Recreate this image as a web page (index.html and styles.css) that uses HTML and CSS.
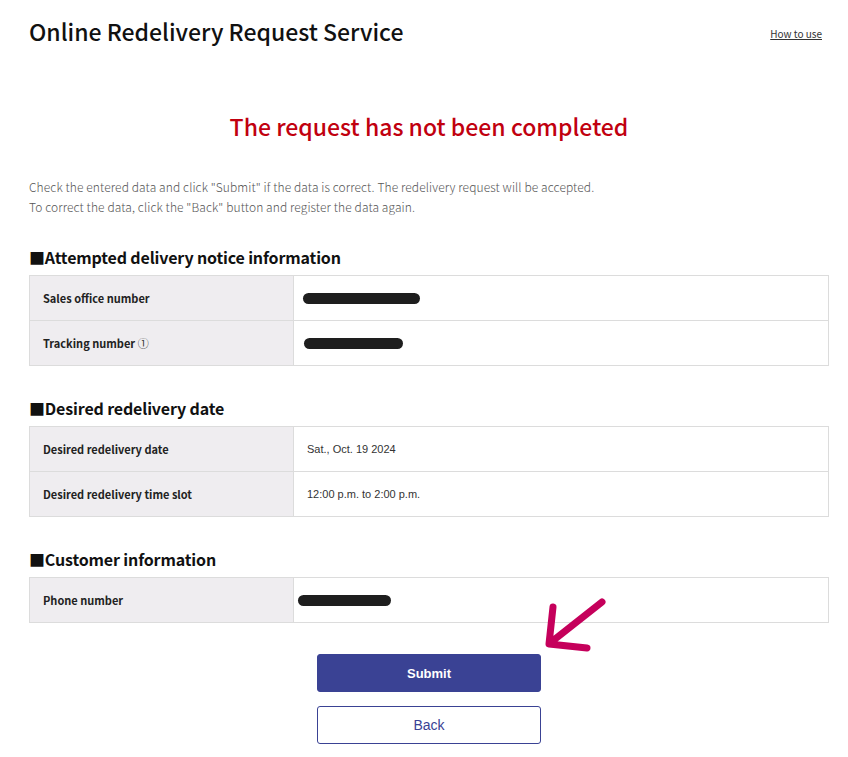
FILE: index.html
```html
<!DOCTYPE html>
<html lang="en">
<head>
<meta charset="utf-8">
<title>Online Redelivery Request Service</title>
<link rel="stylesheet" href="styles.css">
</head>
<body>
<div class="page">
  <header class="header">
    <h1 class="title">Online Redelivery Request Service</h1>
    <a class="howto" href="#">How to use</a>
  </header>

  <h2 class="alert">The request has not been completed</h2>

  <p class="lead">Check the entered data and click "Submit" if the data is correct. The redelivery request will be accepted.<br>To correct the data, click the "Back" button and register the data again.</p>

  <h3 class="section">■Attempted delivery notice information</h3>
  <table class="info">
    <tr><th>Sales office number</th><td><span class="redact r1"></span></td></tr>
    <tr><th>Tracking number <span class="circ">①</span></th><td><span class="redact r2"></span></td></tr>
  </table>

  <h3 class="section">■Desired redelivery date</h3>
  <table class="info">
    <tr><th>Desired redelivery date</th><td>Sat., Oct. 19 2024</td></tr>
    <tr><th>Desired redelivery time slot</th><td>12:00 p.m. to 2:00 p.m.</td></tr>
  </table>

  <h3 class="section">■Customer information</h3>
  <table class="info">
    <tr><th>Phone number</th><td><span class="redact r3"></span></td></tr>
  </table>

  <div class="actions">
    <button class="btn btn-primary">Submit</button>
    <button class="btn btn-secondary">Back</button>
  </div>
</div>

<svg class="arrow" width="80" height="70" viewBox="0 0 80 70">
  <path d="M62 7 L10 48 M13 12 L9 49 L47 53" fill="none" stroke="#c5005b" stroke-width="7" stroke-linecap="round" stroke-linejoin="round"/>
</svg>
</body>
</html>
```

FILE: styles.css
```css
html, body {
  margin: 0;
  padding: 0;
  background: #fff;
}
body {
  font-family: "Noto Sans CJK JP", "Noto Sans", sans-serif;
  color: #111;
  position: relative;
}
.page {
  width: 800px;
  margin-left: 29px;
}
.header {
  display: flex;
  justify-content: space-between;
  align-items: center;
  margin-top: 16px;
  height: 30px;
  padding-right: 7px;
}
.title {
  margin: 0;
  font-size: 23px;
  font-weight: 500;
  line-height: 30px;
  color: #111;
}
.howto {
  font-size: 10px;
  color: #333;
  text-decoration: underline;
  line-height: 14px;
  margin-top: 6px;
}
.alert {
  margin: 65px 0 0;
  text-align: center;
  color: #c1000f;
  font-size: 23px;
  font-weight: 500;
  line-height: 30px;
}
.lead {
  margin: 36px 0 0;
  font-size: 12px;
  line-height: 20px;
  color: #555;
  font-weight: 300;
  letter-spacing: 0.1px;
}
.section {
  margin: 28px 0 6px;
  font-size: 16px;
  line-height: 24px;
  font-weight: 700;
  color: #111;
  letter-spacing: -0.15px;
}
.info + .section {
  margin-top: 30px;
}
.info {
  width: 800px;
  border-collapse: collapse;
  table-layout: fixed;
}
.info th, .info td {
  border: 1px solid #dcdcdc;
  height: 44px;
  padding: 0 13px;
  text-align: left;
  vertical-align: middle;
}
.info th {
  width: 237px;
  background: #efedf0;
  font-size: 11px;
  font-weight: 700;
  color: #222;
}
.info td {
  font-family: "Liberation Sans", Arial, sans-serif;
  font-size: 11px;
  color: #333;
}
.circ {
  font-weight: 400;
  color: #333;
}
.redact {
  display: inline-block;
  height: 11px;
  background: #1e1e1e;
  border-radius: 6px;
  vertical-align: middle;
}
.r1 { width: 117px; margin-left: -4px; }
.r2 { width: 99px; margin-left: -3px; }
.r3 { width: 93px; margin-left: -9px; }
.actions {
  display: flex;
  flex-direction: column;
  align-items: center;
  gap: 14px;
  margin-top: 31px;
}
.btn {
  width: 224px;
  height: 38px;
  border-radius: 3px;
  font-family: "Liberation Sans", Arial, sans-serif;
  font-size: 13px;
  cursor: pointer;
}
.btn-primary {
  background: #3a4294;
  border: 1px solid #3a4294;
  color: #fff;
  font-weight: 700;
}
.btn-secondary {
  background: #fff;
  border: 1px solid #3a4294;
  color: #3a4294;
  font-size: 14px;
}
.arrow {
  position: absolute;
  left: 540px;
  top: 595px;
}
```
